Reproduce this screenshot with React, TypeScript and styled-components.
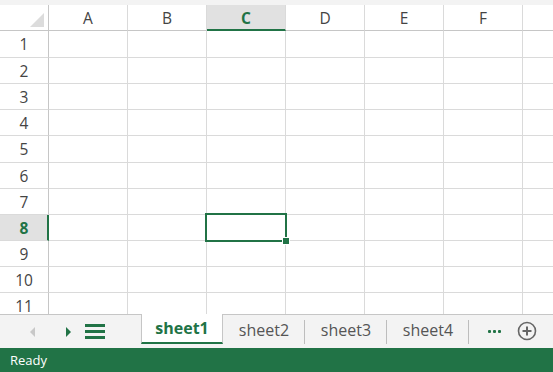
import React from 'react';
import styled, { createGlobalStyle } from 'styled-components';

const GREEN = '#217346';
const GRID = '#dadada';
const HEAD_LINE = '#c6c6c6';
const TEXT = '#444';

const GlobalStyle = createGlobalStyle`
  html, body { margin: 0; padding: 0; overflow: hidden; }
  body { font-family: "Open Sans", "Noto Sans", "Liberation Sans", sans-serif; }
`;

const Window = styled.div`
  width: 553px;
  height: 372px;
  display: flex;
  flex-direction: column;
  background: #fff;
`;

const TopStrip = styled.div`
  height: 5px;
  background: #f3f3f3;
  flex: none;
`;

const Sheet = styled.div`
  flex: 1;
  overflow: hidden;
`;

const Row = styled.div<{ $h?: number }>`
  display: grid;
  grid-template-columns: 49px repeat(7, 79px);
  height: ${p => p.$h ?? 26}px;
`;

const Corner = styled.div`
  position: relative;
  border-right: 1px solid ${HEAD_LINE};
  border-bottom: 1px solid ${HEAD_LINE};
  box-sizing: border-box;
  svg { position: absolute; right: 4px; bottom: 3px; }
`;

const ColHead = styled.div<{ $active?: boolean }>`
  display: flex;
  align-items: center;
  justify-content: center;
  box-sizing: border-box;
  font-size: 15.5px;
  color: ${p => (p.$active ? GREEN : TEXT)};
  font-weight: ${p => (p.$active ? 700 : 400)};
  background: ${p => (p.$active ? '#e1e1e1' : '#fff')};
  border-right: 1px solid ${GRID};
  border-bottom: ${p => (p.$active ? `2px solid ${GREEN}` : `1px solid ${HEAD_LINE}`)};
  padding-top: ${p => (p.$active ? '1px' : '0')};
`;

const RowHead = styled.div<{ $active?: boolean }>`
  display: flex;
  align-items: center;
  justify-content: center;
  box-sizing: border-box;
  font-size: 15.5px;
  color: ${p => (p.$active ? GREEN : TEXT)};
  font-weight: ${p => (p.$active ? 700 : 400)};
  background: ${p => (p.$active ? '#e1e1e1' : '#fff')};
  border-right: ${p => (p.$active ? `2px solid ${GREEN}` : `1px solid ${HEAD_LINE}`)};
  border-bottom: 1px solid ${GRID};
  padding-left: ${p => (p.$active ? '1px' : '0')};
`;

const Cell = styled.div`
  position: relative;
  box-sizing: border-box;
  border-right: 1px solid ${GRID};
  border-bottom: 1px solid ${GRID};
`;

const Selection = styled.div`
  position: absolute;
  left: -2px;
  top: -2px;
  right: -2px;
  bottom: -2px;
  border: 2px solid ${GREEN};
  z-index: 2;
`;

const FillHandle = styled.div`
  position: absolute;
  right: -5px;
  bottom: -5px;
  width: 6px;
  height: 6px;
  background: ${GREEN};
  border: 1px solid #fff;
`;

const TabBar = styled.div`
  flex: none;
  height: 34px;
  box-sizing: border-box;
  background: #f3f3f3;
  border-top: 1px solid ${HEAD_LINE};
  display: flex;
  align-items: stretch;
`;

const Nav = styled.div`
  width: 141px;
  display: flex;
  align-items: center;
  padding-left: 30px;
  box-sizing: border-box;
`;

const NavArrow = styled.div<{ $dir: 'left' | 'right'; $on?: boolean }>`
  width: 0;
  height: 0;
  border-top: 5px solid transparent;
  border-bottom: 5px solid transparent;
  ${p =>
    p.$dir === 'left'
      ? `border-right: 5px solid ${p.$on ? GREEN : '#c8c8c8'};`
      : `border-left: 5px solid ${p.$on ? GREEN : '#c8c8c8'};`}
  margin-right: ${p => (p.$dir === 'left' ? '31px' : '14px')};
`;

const Burger = styled.div`
  width: 20px;
  height: 15px;
  display: flex;
  flex-direction: column;
  justify-content: space-between;
  span { display: block; height: 3px; background: ${GREEN}; }
`;

const Tab = styled.div<{ $active?: boolean }>`
  width: 82px;
  display: flex;
  align-items: center;
  justify-content: center;
  position: relative;
  box-sizing: border-box;
  font-size: 16px;
  padding-bottom: 3px;
  margin-top: -1px;
  ${p =>
    p.$active
      ? `
    background: #fff;
    color: ${GREEN};
    font-weight: 700;
    border-left: 1px solid ${HEAD_LINE};
    border-right: 1px solid ${HEAD_LINE};
    border-bottom: 2px solid ${GREEN};
    margin-bottom: 4px;
    padding-bottom: 0;
  `
      : `
    color: #555;
    &::after {
      content: '';
      position: absolute;
      right: 0;
      top: 6px;
      bottom: 4px;
      width: 1px;
      background: #bdbdbd;
    }
  `}
`;

const More = styled.div`
  width: 46px;
  display: flex;
  align-items: center;
  justify-content: center;
  gap: 2px;
  padding-left: 2px;
  span { width: 3px; height: 3px; background: ${GREEN}; border-radius: 1px; }
`;

const AddSheet = styled.div`
  display: flex;
  align-items: center;
  padding-bottom: 2px;
`;

const StatusBar = styled.div`
  flex: none;
  height: 24px;
  background: ${GREEN};
  color: #fff;
  font-size: 13px;
  display: flex;
  align-items: center;
  padding-left: 10px;
`;

const cols = ['A', 'B', 'C', 'D', 'E', 'F', ''];
const rows = [27, 26, 26, 26, 27, 26, 26, 26, 26, 26, 26];

export default function App() {
  return (
    <Window>
      <GlobalStyle />
      <TopStrip />
      <Sheet>
        <Row>
          <Corner>
            <svg width="14" height="14" viewBox="0 0 14 14">
              <polygon points="14,0 14,14 0,14" fill="#dcdcdc" />
            </svg>
          </Corner>
          {cols.map((c, i) => (
            <ColHead key={i} $active={c === 'C'}>{c}</ColHead>
          ))}
        </Row>
        {rows.map((h, idx) => {
          const r = idx + 1;
          return (
            <Row key={r} $h={h}>
              <RowHead $active={r === 8}>{r}</RowHead>
              {cols.map((c, i) => (
                <Cell key={i}>
                  {r === 8 && c === 'C' && (
                    <Selection>
                      <FillHandle />
                    </Selection>
                  )}
                </Cell>
              ))}
            </Row>
          );
        })}
      </Sheet>
      <TabBar>
        <Nav>
          <NavArrow $dir="left" />
          <NavArrow $dir="right" $on />
          <Burger><span /><span /><span /></Burger>
        </Nav>
        <Tab $active>sheet1</Tab>
        <Tab>sheet2</Tab>
        <Tab>sheet3</Tab>
        <Tab>sheet4</Tab>
        <More><span /><span /><span /></More>
        <AddSheet>
          <svg width="20" height="20" viewBox="0 0 20 20">
            <circle cx="10" cy="10" r="8.5" fill="none" stroke="#666" strokeWidth="1.6" />
            <line x1="10" y1="5.5" x2="10" y2="14.5" stroke="#666" strokeWidth="2" />
            <line x1="5.5" y1="10" x2="14.5" y2="10" stroke="#666" strokeWidth="2" />
          </svg>
        </AddSheet>
      </TabBar>
      <StatusBar>Ready</StatusBar>
    </Window>
  );
}
